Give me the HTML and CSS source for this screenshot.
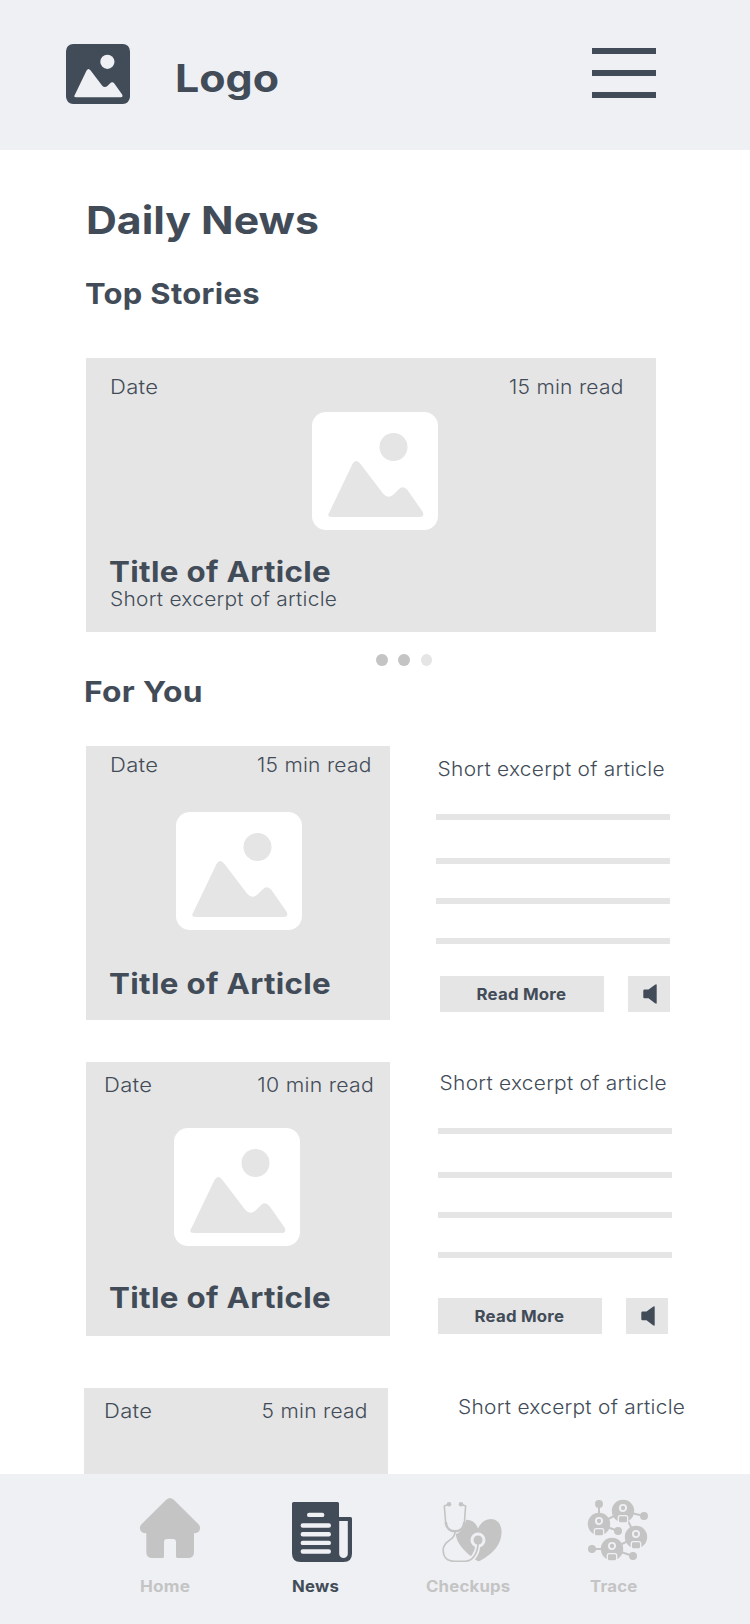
FILE: index.html
```html
<!DOCTYPE html>
<html lang="en">
<head>
<meta charset="utf-8">
<title>Daily News</title>
<link rel="stylesheet" href="styles.css">
</head>
<body>
<svg class="defs" width="0" height="0" aria-hidden="true">
  <symbol id="picture" viewBox="0 0 126 118">
    <rect width="126" height="118" rx="14" fill="currentColor"/>
    <g class="picture-cut">
      <circle cx="81.5" cy="35" r="14"/>
      <path d="M17 101L40.5 52Q44 46 48.5 52L71 81.5Q76 87.5 81.500 82.500L86.500 77.500Q91 73 95.500 78L110.500 99.500Q113 104.800 108 105H20Q14.500 104.500 17 101Z"/>
    </g>
  </symbol>
  <symbol id="speaker" viewBox="0 0 14 20">
    <path d="M1.500 5.500H5.500L12 .7Q13.700 -.2 13.700 1V19Q13.700 20.200 12 19.300L5.500 14.300H1.500Q.3 14.300 .3 13.100V6.700Q.3 5.500 1.500 5.500Z" fill="currentColor"/>
  </symbol>
  <symbol id="person" viewBox="-12 -12 24 24">
    <circle r="11.200" fill="currentColor"/>
    <circle cy="-3" r="3.100" class="cut-line"/>
    <path d="M-5.300 12V6.500Q-5.300 3.900 -3 3.900H3Q5.300 3.900 5.300 6.500V12Z" class="cut"/>
    <rect x="-4" y="5.200" width="8" height="6" rx="1.200" fill="currentColor"/>
  </symbol>
</svg>

<header class="header">
  <svg class="header-icon"><use href="#picture"/></svg>
  <span class="logo">Logo</span>
  <div class="menu"><i></i><i></i><i></i></div>
</header>

<main class="main">
  <h1>Daily News</h1>
  <h2 class="top-stories">Top Stories</h2>
  <section class="hero">
    <div class="meta"><span>Date</span><span>15 min read</span></div>
    <svg class="thumb"><use href="#picture"/></svg>
    <h3>Title of Article</h3>
    <p>Short excerpt of article</p>
  </section>
  <div class="dots"><i></i><i></i><i></i></div>
  <h2 class="for-you">For You</h2>

  <article class="row row-a">
    <div class="card">
      <div class="meta"><span>Date</span><span>15 min read</span></div>
      <svg class="thumb"><use href="#picture"/></svg>
      <h3>Title of Article</h3>
    </div>
    <div class="side">
      <p>Short excerpt of article</p>
      <div class="lines"><i></i><i></i><i></i><i></i></div>
      <div class="actions">
        <div class="more"><span>Read More</span></div>
        <div class="sound"><svg><use href="#speaker"/></svg></div>
      </div>
    </div>
  </article>

  <article class="row row-b">
    <div class="card">
      <div class="meta"><span>Date</span><span>10 min read</span></div>
      <svg class="thumb"><use href="#picture"/></svg>
      <h3>Title of Article</h3>
    </div>
    <div class="side">
      <p>Short excerpt of article</p>
      <div class="lines"><i></i><i></i><i></i><i></i></div>
      <div class="actions">
        <div class="more"><span>Read More</span></div>
        <div class="sound"><svg><use href="#speaker"/></svg></div>
      </div>
    </div>
  </article>

  <article class="row row-c">
    <div class="card">
      <div class="meta"><span>Date</span><span>5 min read</span></div>
    </div>
    <div class="side"><p>Short excerpt of article</p></div>
  </article>
</main>

<nav class="nav">
  <div class="tab home">
    <svg viewBox="0 0 60 60"><path fill="currentColor" d="M26.500 1.500Q30 -1.500 33.500 1.500L58.500 26.200Q60.500 28.500 60 31Q59 35.300 54 35.300V54Q54 60 48 60H37.500Q36 60 36 58.500V44Q36 41 33 41H27Q24 41 24 44V58.500Q24 60 22.500 60H12.300Q6.300 60 6.300 54V35.300Q1 35.300 0 31Q-.5 28.500 1.500 26.200Z"/></svg>
    <span>Home</span>
  </div>
  <div class="tab news">
    <svg viewBox="0 0 60 60">
      <path fill="currentColor" d="M1.500 0H45.500Q47 0 47 1.500V15H58.500Q60 15 60 16.500V51.500Q60 60 51.500 60H8.500Q0 60 0 51.500V1.500Q0 0 1.500 0Z"/>
      <path class="cut" d="M47.200 19H55.800V51.700A4.300 4.300 0 0 1 47.200 51.700Z"/>
      <path class="news-lines" d="M17.200 12.900H30.200M10.800 23.500H36.800M10.800 32.200H36.800M10.800 40.900H36.800M10.800 49.500H36.800"/>
    </svg>
    <span>News</span>
  </div>
  <div class="tab checkups">
    <svg viewBox="0 0 60 60">
      <path fill="currentColor" d="M24 17.800Q32.500 17.500 36 26.500Q40.500 17 49 17Q59 17.500 59.600 30Q59.500 47 38.500 58.500Q36 60 34 58Q15 45 13.700 32Q22 29.500 24 17.800Z"/>
      <circle class="cut" cx="36" cy="38" r="7.500"/>
      <path class="tube-gap" d="M36 42C35.500 51 31 59.300 23 59.300H17"/>
      <path class="tube" d="M7 2.300L2.300 4L3.800 22M19 2.300L23.600 4L22.300 22M13 30C13 39 1.200 38 1.200 48C1.200 57 7 59.300 13 59.300H23C31 59.300 35.500 51 36 42"/>
      <path class="fork" d="M3.900 21C4.500 26.500 8.500 29.300 13 29.300S21.600 26.500 22.200 21"/>
      <circle cx="7" cy="2.300" r="2.300" fill="currentColor"/><circle cx="19" cy="2.300" r="2.300" fill="currentColor"/><circle cx="36" cy="38" r="4.500" fill="currentColor"/>
    </svg>
    <span>Checkups</span>
  </div>
  <div class="tab trace">
    <svg viewBox="0 0 60 60">
      <path class="links" d="M11 4V24M11 24L30 31M11 24L35 11L56 16M35 11L48 37L24 49H4M24 49L45 56"/>
      <g fill="currentColor"><circle cx="11" cy="4" r="4"/><circle cx="56" cy="16" r="4"/><circle cx="30" cy="31" r="4"/><circle cx="4" cy="49" r="4"/><circle cx="45" cy="56" r="4"/></g>
      <use href="#person" x="23" y="-1" width="24" height="24"/>
      <use href="#person" x="-1" y="12" width="24" height="24"/>
      <use href="#person" x="36" y="25" width="24" height="24"/>
      <use href="#person" x="12" y="37" width="24" height="24"/>
    </svg>
    <span>Trace</span>
  </div>
</nav>
</body>
</html>
```
FILE: styles.css
```css
* { box-sizing: border-box; margin: 0; padding: 0; }
body {
  width: 750px; height: 1624px; overflow: hidden;
  display: flex; flex-direction: column;
  background: #fff; color: #424c58;
  font-family: Inter, sans-serif;
}
.defs { position: absolute; }
i, svg { display: block; }
.cut { fill: #eff0f4; }
.cut-line { fill: currentColor; stroke: #eff0f4; stroke-width: 1.9; }
.picture-cut { fill: var(--cut, #e5e5e5); }

/* Wide letterforms */
h1, h2, h3, p, .logo, .meta span, .tab span { transform: scaleX(1.08); transform-origin: 0 50%; }

.header {
  flex: none; height: 150px; display: flex; align-items: flex-start;
  background: #eff0f4; padding: 44px 94px 0 66px; --cut: #eff0f4;
}
.header-icon { width: 64px; height: 60px; }
.logo { margin: 10px 0 0 45px; font-size: 38.500px; line-height: 48px; font-weight: 700; letter-spacing: 0; transform: scaleX(1.115); }
.menu { width: 64px; margin: 4px 0 0 auto; display: grid; gap: 16px; }
.menu i { height: 6px; background: #424c58; }

.main { flex: 1; min-height: 0; overflow: hidden; padding: 46px 0 0 86px; }
h1 { font-size: 38.500px; line-height: 48px; letter-spacing: 0; transform: scaleX(1.11); }
h2 { font-size: 29px; line-height: 36px; letter-spacing: .3px; }
h3 { font-size: 29px; line-height: 36px; letter-spacing: .3px; white-space: nowrap; }
p, .meta { font-size: 19.500px; line-height: 24px; font-weight: 350; letter-spacing: .25px; white-space: nowrap; }
p { transform: scaleX(1.071); }
.meta { display: flex; justify-content: space-between; }
.meta span:first-child { transform: scaleX(1.13); }
.meta span:last-child { transform: scaleX(1.075); transform-origin: 100% 50%; }
.top-stories { margin: 32px 0 0 -1px; transform: scaleX(1.067); }

.hero { width: 570px; height: 274px; margin-top: 46px; padding: 17px 32px 0 24px; background: #e5e5e5; }
.thumb { width: 126px; height: 118px; color: #fff; }
.hero .thumb { margin: 13px 0 0 202px; }
.hero h3 { margin: 24px 0 0 -1px; }
.hero p { margin: -3px 0 0 -.3px; }
.dots { display: flex; gap: 10.750px; margin: 22px 0 0 290px; }
.dots i { width: 11.500px; height: 12px; border-radius: 50%; background: #c4c4c4; }
.dots i:last-child { background: #e5e5e5; }
.for-you { margin: 8px 0 0 -2px; transform: scaleX(1.095); }

.row { display: flex; align-items: flex-start; }
.card { flex: none; width: 304px; height: 274px; background: #e5e5e5; padding: 7px 18px 0 24px; }
.card .thumb { margin: 35px 0 0 66px; }
.card h3 { margin: 36px 0 0 -1px; }
.lines { width: 234px; margin-top: 33px; }
.lines i { height: 6px; margin-bottom: 34px; background: #e5e5e5; }
.lines i:first-child { margin-bottom: 38px; }
.lines i:last-child { margin-bottom: 0; }
.actions { display: flex; gap: 24px; }
.more { width: 164px; height: 36px; background: #e5e5e5; display: flex; justify-content: center; padding-right: 2px; font-size: 15.500px; line-height: 37px; font-weight: 700; letter-spacing: .2px; }
.more span { transform: scaleX(1.085); }
.sound { width: 42px; height: 36px; background: #e5e5e5; padding: 8px 0 0 15px; }
.sound svg { width: 14px; height: 20px; }

.row-a { margin-top: 36px; }
.row-a .side { margin: 11px 0 0 46px; }
.row-a .side p { padding-left: 1.500px; }
.row-a .actions { margin: 32px 0 0 4px; }

.row-b { margin-top: 42px; }
.row-b .card { padding: 11px 16px 0 18px; }
.row-b .thumb { margin: 31px 0 0 70px; }
.row-b h3 { margin: 34px 0 0 5px; }
.row-b .side { margin: 9px 0 0 48px; }
.row-b .side p { padding-left: 1.500px; }
.row-b .actions { margin-top: 40px; }
.row-b .meta span:last-child { transform: scaleX(1.09); }

.row-c { margin: 52px 0 0 -2px; }
.row-c .card { padding: 11px 20px 0 20px; }
.row-c .side { margin: 7px 0 0 69.500px; }

.nav {
  flex: none; height: 150px; background: #eff0f4; color: #c4c4c4;
  display: grid; grid-template-columns: 152px 134px 162px 1fr; padding-left: 140px;
}
.tab { display: grid; grid-template-rows: 60px 20px; align-content: start; }
.tab svg { width: 60px; height: 60px; overflow: visible; }
.tab span { font-size: 15.500px; line-height: 20px; font-weight: 700; letter-spacing: .2px; }
.tab.home span { transform: scaleX(1.11); }
.home { padding-top: 24px; row-gap: 19px; }
.news { padding-top: 28px; row-gap: 15px; color: #424c58; }
.checkups { padding-top: 28px; row-gap: 15px; }
.checkups svg { margin-left: 16px; }
.trace { padding-top: 26px; row-gap: 17px; }
.trace span { margin-left: 1.500px; }
.news-lines { stroke: #eff0f4; stroke-width: 4.400; stroke-linecap: round; }
.links { fill: none; stroke: currentColor; stroke-width: 2; }
.tube { fill: none; stroke: currentColor; stroke-width: 1.600; stroke-linejoin: round; }
.tube-gap { fill: none; stroke: #eff0f4; stroke-width: 5; }
.fork { fill: none; stroke: currentColor; stroke-width: 2.600; stroke-linecap: round; }
```
